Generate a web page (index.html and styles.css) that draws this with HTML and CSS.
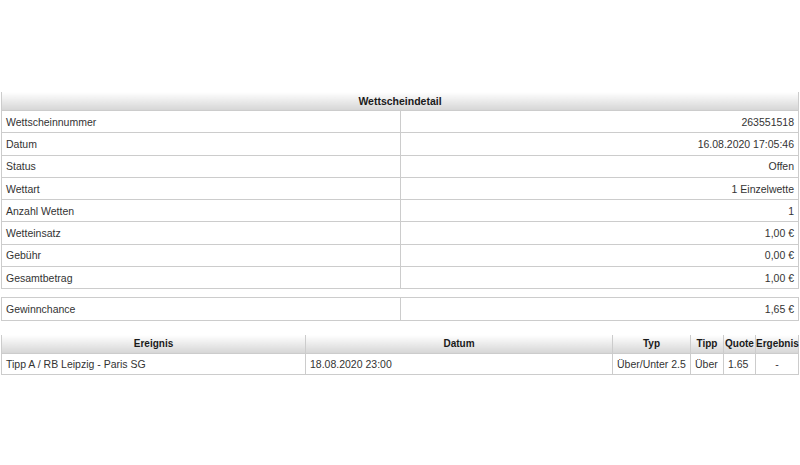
FILE: index.html
```html
<!DOCTYPE html>
<html lang="de">
<head>
<meta charset="utf-8">
<title>Wettscheindetail</title>
<link rel="stylesheet" href="styles.css">
</head>
<body>
<div class="page">
  <table class="detail">
    <thead>
      <tr><th colspan="2">Wettscheindetail</th></tr>
    </thead>
    <tbody>
      <tr><td class="lbl">Wettscheinnummer</td><td class="val">263551518</td></tr>
      <tr><td class="lbl">Datum</td><td class="val">16.08.2020 17:05:46</td></tr>
      <tr><td class="lbl">Status</td><td class="val">Offen</td></tr>
      <tr><td class="lbl">Wettart</td><td class="val">1 Einzelwette</td></tr>
      <tr><td class="lbl">Anzahl Wetten</td><td class="val">1</td></tr>
      <tr><td class="lbl">Wetteinsatz</td><td class="val">1,00 €</td></tr>
      <tr><td class="lbl">Gebühr</td><td class="val">0,00 €</td></tr>
      <tr><td class="lbl">Gesamtbetrag</td><td class="val">1,00 €</td></tr>
    </tbody>
  </table>
  <table class="detail chance">
    <tbody>
      <tr><td class="lbl">Gewinnchance</td><td class="val">1,65 €</td></tr>
    </tbody>
  </table>
  <table class="events">
    <thead>
      <tr>
        <th class="c-ev">Ereignis</th>
        <th class="c-dt">Datum</th>
        <th class="c-typ">Typ</th>
        <th class="c-tipp">Tipp</th>
        <th class="c-q">Quote</th>
        <th class="c-erg">Ergebnis</th>
      </tr>
    </thead>
    <tbody>
      <tr>
        <td>Tipp A / RB Leipzig - Paris SG</td>
        <td>18.08.2020 23:00</td>
        <td>Über/Unter 2.5</td>
        <td>Über</td>
        <td>1.65</td>
        <td class="center">-</td>
      </tr>
    </tbody>
  </table>
</div>
</body>
</html>
```
FILE: styles.css
```css
html, body {
  margin: 0;
  padding: 0;
  background: #ffffff;
}
body {
  font-family: "Liberation Sans", Arial, sans-serif;
  font-size: 10.5px;
  color: #333333;
}
.page {
  padding: 92px 1px 0 1px;
}
table {
  width: 100%;
  border-collapse: collapse;
  table-layout: fixed;
}
th {
  height: 18px;
  padding: 0;
  font-weight: bold;
  color: #1a1a1a;
  background: linear-gradient(#ffffff, #d6d6d6);
  border: 1px solid #cccccc;
  border-top: none;
  text-align: center;
  white-space: nowrap;
}
.detail td {
  height: 21.3px;
  padding: 0 4px;
  border: 1px solid #cccccc;
}
.detail .lbl {
  text-align: left;
}
.detail .val {
  text-align: right;
}
.chance {
  margin-top: 8px;
}
.events {
  margin-top: 14px;
}
.events th {
  height: 18px;
  font-size: 10px;
}
.events td {
  height: 20px;
  padding: 0 4px;
  border: 1px solid #cccccc;
  white-space: nowrap;
}
.events td.center {
  text-align: center;
}
.c-ev { width: 303px; }
.c-dt { width: 306px; }
.c-typ { width: 77px; }
.c-tipp { width: 32px; }
.c-q { width: 31px; }
</style>
```
